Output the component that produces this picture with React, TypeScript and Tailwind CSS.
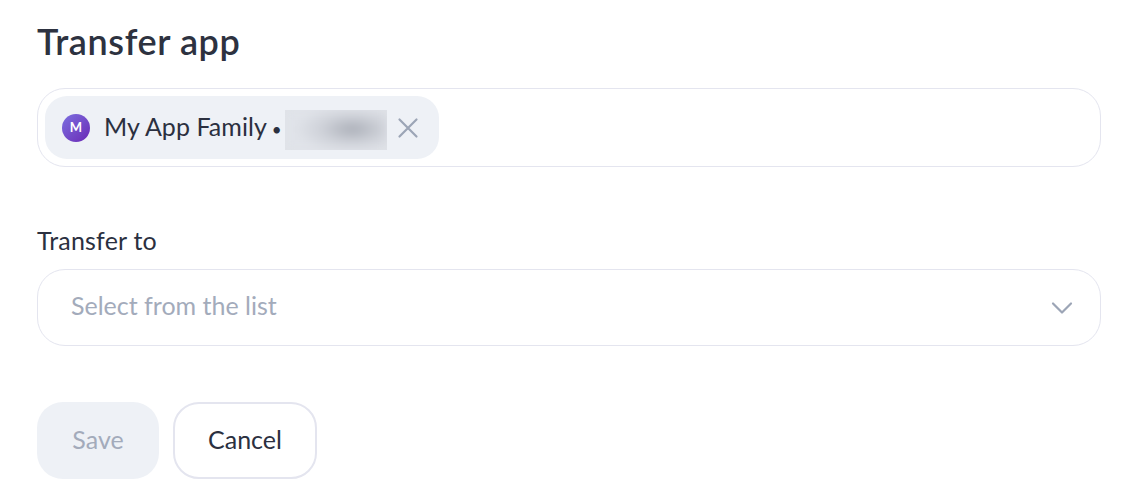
import React from "react";

export default function App() {
  return (
    <div className="w-[1135px] h-[503px] overflow-hidden bg-white pl-[37px] pr-[34px] pt-[21px] text-[#2b3040] font-['Lato','Noto_Sans',sans-serif]">
      <h1 className="text-[36px] leading-[40px] font-semibold tracking-[0.6px] text-[#2d3240]">Transfer app</h1>
      <div className="mt-[27px] h-[79px] rounded-[28px] border border-[#e4e5ef] flex items-center pl-[7px]">
        <div className="h-[63px] w-[394px] rounded-[22px] bg-[#eef1f6] flex items-center pl-[17px]">
          <div className="w-[28px] h-[28px] rounded-full bg-gradient-to-br from-[#7b6fe0] to-[#6a25b5] flex items-center justify-center text-white text-[13px] font-bold shrink-0">M</div>
          <span className="ml-[14px] text-[25px] leading-[32px] tracking-[0.05px] text-[#2b3040] whitespace-nowrap">My App Family <span className="text-[17px] -ml-[1px]">•</span></span>
          <div className="ml-[3px] mt-[4px] w-[102px] h-[40px] overflow-hidden shrink-0 bg-[#e0e3e8]">
            <div className="w-full h-full bg-[radial-gradient(ellipse_58px_24px_at_66%_48%,#abafb8,#cfd2d9_55%,#e0e3e9)] blur-[4px]" />
          </div>
          <svg className="ml-[10px] shrink-0" width="22" height="22" viewBox="0 0 22 22" fill="none" stroke="#9ca5b6" strokeWidth="2.2" strokeLinecap="round"><path d="M2.5 2.5 19.5 19.5M19.5 2.5 2.5 19.5" /></svg>
        </div>
      </div>
      <div className="mt-[57px] text-[25px] leading-[32px] tracking-[0.2px] text-[#2b3040]">Transfer to</div>
      <div className="mt-[13px] h-[77px] rounded-[28px] border border-[#e4e5ef] flex items-center justify-between pl-[33px] pr-[27px]">
        <span className="mb-[6px] text-[25px] leading-[32px] text-[#a3abbb]">Select from the list</span>
        <svg width="22" height="14" viewBox="0 0 22 14" fill="none" stroke="#9ca5b6" strokeWidth="2.2" strokeLinecap="round" strokeLinejoin="round"><path d="M2 2.5 11 11.5 20 2.5" /></svg>
      </div>
      <div className="mt-[56px] flex gap-[14px]">
        <button className="w-[122px] h-[77px] pb-[2px] rounded-[26px] bg-[#eef1f6] text-[25px] text-[#a3abbb]">Save</button>
        <button className="w-[144px] h-[77px] pb-[2px] rounded-[26px] bg-white border-2 border-[#e4e5ef] text-[25px] text-[#2b3040]">Cancel</button>
      </div>
    </div>
  );
}
